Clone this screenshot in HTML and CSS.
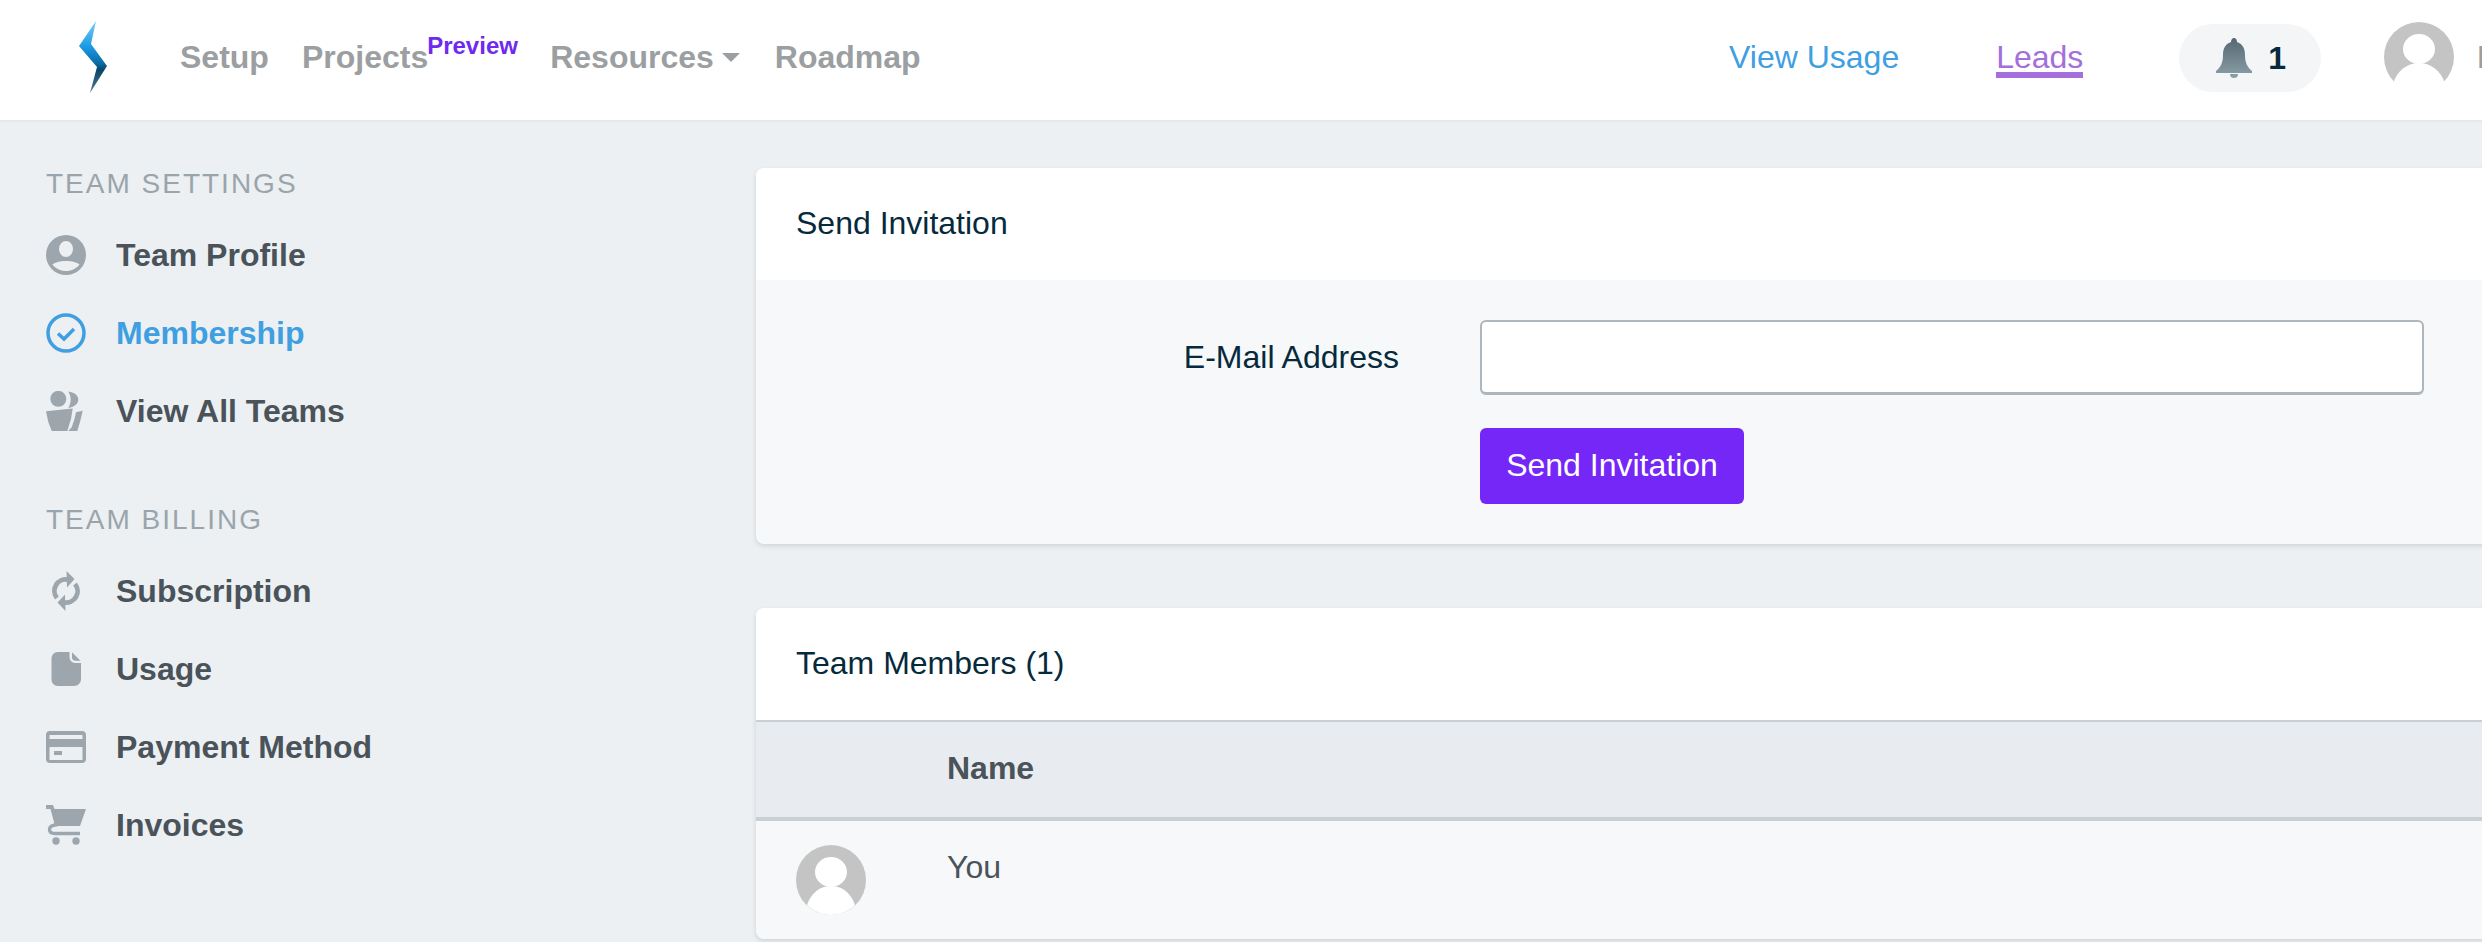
FILE: index.html
```html
<!DOCTYPE html>
<html lang="en">
<head>
<meta charset="utf-8">
<title>Membership</title>
<link rel="stylesheet" href="styles.css">
</head>
<body>
<header class="topbar">
  <div class="nav-left">
    <svg class="logo" width="32" height="74" viewBox="0 0 32 74">
      <defs>
        <linearGradient id="lg" x1="0" y1="0" x2="0" y2="1">
          <stop offset="0" stop-color="#7ccdf5"/>
          <stop offset=".35" stop-color="#1c9be6"/>
          <stop offset=".58" stop-color="#0a6ea8"/>
          <stop offset=".68" stop-color="#0b4566"/>
          <stop offset="1" stop-color="#4f7c94"/>
        </linearGradient>
      </defs>
      <path d="M18 1 L13 24 L29 46 L12 73 L19 47 L1 26 Z" fill="url(#lg)"/>
    </svg>
    <a class="nav-link nav-setup">Setup</a>
    <a class="nav-link nav-projects">Projects<span class="preview">Preview</span></a>
    <a class="nav-link nav-resources">Resources<span class="caret"></span></a>
    <a class="nav-link">Roadmap</a>
  </div>
  <div class="nav-right">
    <a class="usage">View Usage</a>
    <a class="leads">Leads</a>
    <div class="bell-pill">
      <svg width="36" height="40" viewBox="0 0 36 40">
        <defs>
          <linearGradient id="bg" x1="0" y1="0" x2="0" y2="1">
            <stop offset="0" stop-color="#566873"/>
            <stop offset="1" stop-color="#8ba0a8"/>
          </linearGradient>
        </defs>
        <path d="M18 0 C20 0 21 2 21 4 C27 6 29 11 29 17 C29 24 31 29 36 33 L36 35 L0 35 L0 33 C5 29 7 24 7 17 C7 11 9 6 15 4 C15 2 16 0 18 0 Z M14 36 L22 36 C22 39 20 40 18 40 C16 40 14 39 14 36 Z" fill="url(#bg)"/>
      </svg>
      <span class="bell-count">1</span>
    </div>
    <svg class="avatar" width="70" height="70" viewBox="0 0 70 70">
      <circle cx="35" cy="35" r="35" fill="#c4c4c4"/>
      <ellipse cx="35" cy="27" rx="16" ry="15" fill="#fff"/>
      <path d="M9 62 C13 48 24 41 35 41 C46 41 57 48 61 62 L50 74 L20 74 Z" fill="#fff"/>
    </svg>
    <span class="user-name">Me</span>
  </div>
</header>

<div class="layout">
  <aside class="sidebar">
    <h3 class="side-title">Team Settings</h3>
    <ul class="side-list">
      <li class="side-item">
        <span class="side-icon">
          <svg width="40" height="40" viewBox="0 0 40 40"><path fill-rule="evenodd" d="M20 0a20 20 0 1 1 0 40a20 20 0 1 1 0-40Z M20 6a7 8 0 1 0 0 16a7 8 0 1 0 0-16Z M20 26c-6 0-11 1.500-13.500 3.500C9.500 33.500 14.500 36 20 36s10.500-2.500 13.500-6.500C31 27.500 26 26 20 26Z" fill="#9ca6ac"/></svg>
        </span>Team Profile
      </li>
      <li class="side-item is-active">
        <span class="side-icon">
          <svg width="40" height="40" viewBox="0 0 40 40"><circle cx="20" cy="20" r="18" fill="none" stroke="#3f9fe0" stroke-width="3.500"/><path d="M12 20.500 L18 26 L28 16" fill="none" stroke="#3f9fe0" stroke-width="3.500"/></svg>
        </span>Membership
      </li>
      <li class="side-item">
        <span class="side-icon">
          <svg width="40" height="40" viewBox="0 0 40 40"><g fill="#9ca6ac"><circle cx="12.300" cy="7.800" r="8"/><path d="M22.300 0.600 C28 1.500 32.300 4 32.300 8.500 C32.300 13 28 16 22.300 17 C25.500 12 25.500 5.500 22.300 0.600 Z"/><path d="M0 20.300 L26.700 17.500 L25 28 L21.300 40 L5.700 40 L2.300 31 Z"/><path d="M30 21.300 L36.700 19.700 L34 31 L31.300 40 L22.300 40 L25.700 36.300 L28.500 28 Z"/></g></svg>
        </span>View All Teams
      </li>
    </ul>
    <h3 class="side-title side-title-next">Team Billing</h3>
    <ul class="side-list">
      <li class="side-item">
        <span class="side-icon">
          <svg width="40" height="40" viewBox="0 0 40 40"><g fill="#9ca6ac"><path d="M20.500 0 L28.500 8 L21 16.500 Z"/><path d="M19.500 40 L11.500 31.500 L19 23.500 Z"/></g><g fill="none" stroke="#9ca6ac" stroke-width="4.800"><path d="M22 8.600 A11.400 11.400 0 0 0 11 27"/><path d="M18 31.400 A11.400 11.400 0 0 0 29 13"/></g></svg>
        </span>Subscription
      </li>
      <li class="side-item">
        <span class="side-icon">
          <svg width="40" height="40" viewBox="0 0 40 40"><g fill="#9ca6ac"><path d="M12 3 H23.500 V8 C23.500 11.500 26 14 29.500 14 H35 V30 C35 34 32 37 28 37 H12 C8 37 5.500 34 5.500 30 V10 C5.500 6 8 3 12 3 Z"/><path d="M26 3.200 L34.500 11.800 H29.500 C27.500 11.800 26 10.500 26 8.500 Z"/></g></svg>
        </span>Usage
      </li>
      <li class="side-item">
        <span class="side-icon">
          <svg width="40" height="40" viewBox="0 0 40 40"><path fill-rule="evenodd" d="M4 4 H36 C38.500 4 40 5.500 40 8 V32 C40 34.500 38.500 36 36 36 H4 C1.500 36 0 34.500 0 32 V8 C0 5.500 1.500 4 4 4 Z M3.500 8 V12 H36.500 V8 Z M3.500 20 V33 H36.500 V20 Z M8 24 H16 V28 H8 Z" fill="#9ca6ac"/></svg>
        </span>Payment Method
      </li>
      <li class="side-item">
        <span class="side-icon">
          <svg width="40" height="40" viewBox="0 0 40 40"><g fill="#9ca6ac"><path d="M0 0 H7 L8.500 4 H40 L34 21 H9 L4.500 4 H0 Z"/><circle cx="10" cy="36" r="3.700"/><circle cx="30" cy="36" r="3.700"/></g><path d="M12 19.500 C6 20 3.500 22 3.500 24.500 C3.500 27.500 6 28.500 9 28.500 H34" fill="none" stroke="#9ca6ac" stroke-width="3.400"/></svg>
        </span>Invoices
      </li>
    </ul>
  </aside>

  <main class="content">
    <section class="card">
      <div class="card-header">Send Invitation</div>
      <form class="card-body">
        <div class="form-row">
          <label class="form-label" for="email">E-Mail Address</label>
          <input class="form-input" id="email" type="email">
        </div>
        <div class="form-actions">
          <button class="btn" type="button">Send Invitation</button>
        </div>
      </form>
    </section>

    <section class="card">
      <div class="card-header">Team Members (1)</div>
      <table class="members">
        <thead>
          <tr><th class="col-photo"></th><th>Name</th></tr>
        </thead>
        <tbody>
          <tr>
            <td class="col-photo">
              <svg class="member-photo" width="70" height="70" viewBox="0 0 70 70">
                <circle cx="35" cy="35" r="35" fill="#c4c4c4"/>
                <ellipse cx="35" cy="27" rx="16" ry="15" fill="#fff"/>
                <path d="M11 60 C15 48 24 41 35 41 C46 41 55 48 59 60 C53 66 44 70 35 70 C26 70 17 66 11 60 Z" fill="#fff"/>
              </svg>
            </td>
            <td class="member-name">You</td>
          </tr>
        </tbody>
      </table>
    </section>
  </main>
</div>
</body>
</html>
```

FILE: styles.css
```css
* {
  box-sizing: border-box;
}

html,
body {
  margin: 0;
  height: 942px;
  overflow: hidden;
}

body {
  background: #ecf0f3;
  font-family: "Liberation Sans", Arial, sans-serif;
  font-size: 32px;
  color: #062a3c;
}

.topbar {
  display: flex;
  justify-content: space-between;
  align-items: center;
  height: 120px;
  background: #fff;
  box-shadow: 0 1px 3px rgba(0, 0, 0, 0.06);
  overflow: hidden;
}

.nav-left {
  display: flex;
  align-items: center;
  padding: 0 0 6px 78px;
}

.logo {
  flex: none;
  margin-right: 70px;
}

.nav-link {
  font-weight: 700;
  color: #9c9fa2;
  white-space: nowrap;
}

.nav-setup {
  margin-right: 33px;
}

.nav-projects {
  position: relative;
  margin-right: 122px;
}

.preview {
  position: absolute;
  left: 100%;
  top: -7px;
  margin-left: -1px;
  font-size: 24px;
  color: #6f2af0;
}

.nav-resources {
  display: flex;
  align-items: center;
  margin-right: 35px;
}

.caret {
  width: 0;
  height: 0;
  margin-left: 8px;
  border-left: 9px solid transparent;
  border-right: 9px solid transparent;
  border-top: 9px solid #9c9fa2;
}

.nav-right {
  display: flex;
  align-items: center;
  flex: 0 0 753px;
  min-width: 0;
  padding-bottom: 6px;
}

.nav-right > * {
  flex: none;
}

.usage {
  color: #3f9fe0;
  margin-right: 97px;
  white-space: nowrap;
}

.leads {
  color: #a46fdc;
  border-bottom: 6px solid #a46fdc;
  line-height: 30px;
  padding-top: 6px;
  margin-right: 96px;
}

.bell-pill {
  display: flex;
  align-items: center;
  gap: 16px;
  width: 142px;
  height: 68px;
  margin: 2px 63px 0 0;
  padding-left: 37px;
  border-radius: 34px;
  background: #f3f5f7;
}

.bell-count {
  font-weight: 700;
  color: #062a3c;
}

.avatar {
  margin-right: 23px;
}

.user-name {
  font-weight: 700;
  color: #9c9fa2;
}

.layout {
  display: flex;
}

.sidebar {
  flex: 0 0 756px;
  padding: 48px 0 0 46px;
}

.side-title {
  margin: 0;
  font-size: 28px;
  line-height: 32px;
  font-weight: 400;
  letter-spacing: 2px;
  text-transform: uppercase;
  color: #9aa5ab;
}

.side-title-next {
  margin-top: 54px;
}

.side-list {
  list-style: none;
  margin: 16px 0 0;
  padding: 0;
}

.side-item {
  display: flex;
  align-items: center;
  height: 78px;
  font-weight: 700;
  color: #495359;
}

.is-active {
  color: #3f9fe0;
}

.side-icon {
  display: flex;
  flex: 0 0 70px;
}

.content {
  display: flex;
  flex-direction: column;
  gap: 64px;
  flex: 0 0 1800px;
  padding-top: 48px;
}

.card {
  border-radius: 8px;
  background: #f6f8fa;
  box-shadow: 0 2px 5px rgba(0, 0, 0, 0.12);
  overflow: hidden;
}

.card-header {
  display: flex;
  align-items: center;
  height: 112px;
  padding: 0 0 2px 40px;
  background: #fff;
}

.card-body {
  height: 264px;
  padding-top: 40px;
}

.form-row {
  display: flex;
  align-items: center;
}

.form-label {
  flex: 0 0 643px;
  text-align: right;
}

.form-input {
  width: 944px;
  height: 75px;
  margin-left: 81px;
  border: 2px solid #adb5bd;
  border-bottom-width: 3px;
  border-radius: 6px;
  background: #fff;
}

.form-actions {
  margin: 33px 0 0 724px;
}

.btn {
  width: 264px;
  height: 76px;
  padding: 0 0 2px;
  border: 0;
  border-radius: 6px;
  background: #7427f7;
  color: #fff;
  font: inherit;
}

.members {
  width: 100%;
  border-collapse: collapse;
  color: #495359;
}

.members th {
  height: 98px;
  padding: 0 0 3px;
  text-align: left;
  background: #e8ecf0;
  border-top: 2px solid #c8cfd5;
  border-bottom: 4px solid #c8cfd5;
}

.col-photo {
  width: 191px;
}

.members td {
  height: 120px;
  padding: 0;
  vertical-align: top;
}

.members td.col-photo {
  padding: 24px 0 0 40px;
}

.member-photo {
  display: block;
}

.members td.member-name {
  padding-top: 28px;
  line-height: 37px;
}
```
